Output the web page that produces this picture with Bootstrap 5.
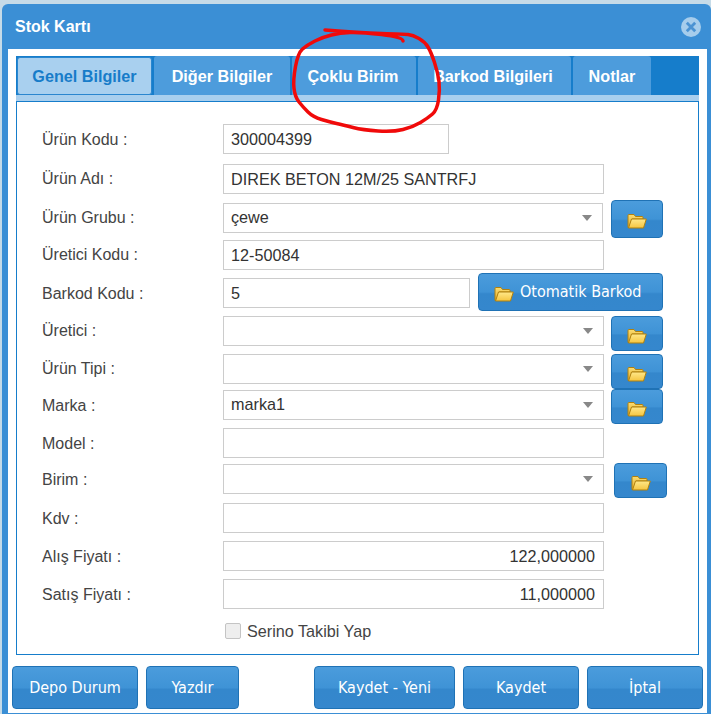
<!DOCTYPE html>
<html lang="tr">
  <head>
    <meta charset="UTF-8" />
    <meta name="viewport" content="width=device-width, initial-scale=1.0" />
    <title>Stok Kartı</title>
    <link
      href="https://cdn.jsdelivr.net/npm/bootstrap@5.3.0/dist/css/bootstrap.min.css"
      rel="stylesheet"
    />
    <style>
      html,
      body {
        height: 714px;
        overflow: hidden;
      }

      body {
        font-family: "Liberation Sans", Arial, sans-serif;
        background-color: #c6dbe8;
        position: relative;
      }

      .stok-window {
        margin: 4px 0 0 2px;
        width: 709px;
        height: 710px;
        background-color: #3b8fd5;
        border: 0;
        border-radius: 6px 6px 0 0;
      }

      .stok-head {
        height: 45px;
        padding: 0 10px 0 13px;
        background: transparent;
        border: 0;
        color: #fff;
        font-size: 16px;
        font-weight: bold;
      }

      .close-icon {
        width: 20px;
        height: 20px;
      }

      .stok-body {
        margin: 0 4px 0 6px;
        height: 664px;
        padding: 7px 8px 0;
        background-color: #fff;
      }

      .stok-tabs {
        height: 45px;
        gap: 2px;
        padding: 0 0 6px 1px;
        background: linear-gradient(#167dcb 39px, #a9cfee 39px);
        border: 0;
        flex-wrap: nowrap;
      }

      .stok-tabs .nav-link {
        height: 39px;
        margin: 0;
        padding: 0;
        text-align: center;
        line-height: 40px;
        font-size: 16.2px;
        font-weight: bold;
        color: #fff;
        background-color: #4d9cdc;
        border: 0;
        border-radius: 3px 3px 0 0;
      }

      .stok-tabs .nav-link.active {
        line-height: 36px;
        margin-top: 1px;
        height: 38px;
        color: #177cc9;
        background-color: #a9d0ef;
        border: 1px solid #2a86cf;
        border-radius: 3px;
      }

      .tab-w1 { width: 135px; }
      .tab-w2 { width: 136px; }
      .stok-tabs .tab-w3 { width: 124px; padding-right: 2px; }
      .stok-tabs .tab-w4 { width: 153px; padding-right: 3px; }
      .tab-w5 { width: 78px; }

      .stok-panel {
        height: 554px;
        padding: 22px 0 0 25px;
        border: 1px solid #167dcb;
      }

      .form-rows {
        display: grid;
        grid-template-rows: 40px 39px 37px 38px 38px 38px 36px 38px 36px 39px 38px 38px 37px 30px;
      }

      .form-rows .stok-label {
        width: 181px;
        flex: none;
        font-size: 16px;
        line-height: 32px;
        color: #444;
        margin: 0;
      }

      .form-rows .stok-label.label-up {
        line-height: 29px;
      }

      .form-rows .form-control,
      .form-rows .form-select {
        height: 30px;
        padding: 0 8px 0 7px;
        flex: none;
        font-size: 16.2px;
        color: #333;
        border: 1px solid #ccc;
        border-radius: 0;
        box-shadow: none;
      }

      .form-rows .form-select {
        padding-bottom: 2px;
        background-image: url("data:image/svg+xml,%3csvg xmlns='http://www.w3.org/2000/svg' viewBox='0 0 10 6'%3e%3cpath fill='%23888' d='M0 0h10L5 6z'/%3e%3c/svg%3e");
        background-size: 10px 6px;
        background-position: right 10px center;
      }

      .w-short { width: 226px; }
      .form-rows .w-full { width: 381px; }
      .form-rows .w-sel { width: 380px; }
      .form-rows .w-bar { width: 247px; }

      .btn-stok {
        --bs-btn-padding-x: 0;
        --bs-btn-padding-y: 0;
        color: #fff;
        background: linear-gradient(#4b9cdc, #3f93d6 50%, #3487cc 55%, #3587cd);
        border: 1px solid #1f72b5;
        border-radius: 4px;
      }

      .btn-stok:hover {
        color: #fff;
        background: #3587cd;
      }

      .btn-folder {
        width: 52px;
        height: 38px;
        flex: none;
        margin-left: 7px;
      }

      .btn-folder svg,
      .btn-auto svg {
        width: 20px;
        height: 16px;
        margin-top: 3px;
      }

      .lift-1 { margin-top: -1px; }
      .lift-3 { margin-top: -3px; }
      .short-btn { height: 35px; }
      .wide-gap { margin-left: 10px; width: 53px; }

      .btn-auto {
        width: 185px;
        height: 38px;
        margin: -5px 0 0 8px;
        padding-left: 15px;
        font-family: "DejaVu Sans Condensed", "Liberation Sans", sans-serif;
        font-size: 16px;
        gap: 6px;
      }

      .check-row {
        padding-left: 2px;
      }

      .check-row .form-check-input {
        width: 16px;
        height: 16px;
        margin: 0 6px 0 0;
        background-color: #eee;
        border: 1px solid #c4c4c4;
        border-radius: 2px;
      }

      .check-row label {
        font-size: 16.2px;
        color: #444;
      }

      .stok-foot {
        gap: 8px;
        margin: 11px -4px 0;
      }

      .stok-foot .btn-stok {
        height: 43px;
        padding-top: 1px;
        font-family: "DejaVu Sans Condensed", "Liberation Sans", sans-serif;
        font-size: 16px;
      }

      .fb-depo { width: 126px; }
      .fb-yazdir { width: 93px; }
      .fb-yeni { width: 141px; }
      .fb-kaydet { width: 116px; }

      .scribble {
        position: absolute;
        left: 0;
        top: 0;
        width: 711px;
        height: 714px;
        pointer-events: none;
      }
    </style>
  </head>
  <body>
    <svg width="0" height="0" class="position-absolute">
      <defs>
        <linearGradient id="folderBack" x1="0" y1="0" x2="0" y2="1">
          <stop offset="0" stop-color="#fbdc70" />
          <stop offset="1" stop-color="#e5ae2c" />
        </linearGradient>
        <linearGradient id="folderFront" x1="0" y1="0" x2="0" y2="1">
          <stop offset="0" stop-color="#ffe88a" />
          <stop offset="1" stop-color="#f5c540" />
        </linearGradient>
        <symbol id="folder" viewBox="0 0 20 16">
          <path d="M1 14.5V2.5Q1 1.5 2 1.5H7L8.5 3.5H15Q16 3.5 16 4.5V6H5L2.5 14.5Z" fill="url(#folderBack)" stroke="#b0800f" />
          <path d="M1.5 15 4.5 6H19.3L16.5 15Z" fill="url(#folderFront)" stroke="#b0800f" stroke-linejoin="round" />
        </symbol>
      </defs>
    </svg>

    <div class="card stok-window">
      <div class="card-header stok-head d-flex align-items-center justify-content-between">
        <span>Stok Kartı</span>
        <svg class="close-icon" viewBox="0 0 20 20">
          <circle cx="10" cy="10" r="10" fill="#a6cdec" />
          <path d="M5.8 5.8 14.2 14.2M14.2 5.8 5.8 14.2" stroke="#4b93d3" stroke-width="2.8" />
        </svg>
      </div>
      <div class="stok-body">
        <ul class="nav nav-tabs stok-tabs">
          <li class="nav-item"><a class="nav-link active tab-w1" href="#">Genel Bilgiler</a></li>
          <li class="nav-item"><a class="nav-link tab-w2" href="#">Diğer Bilgiler</a></li>
          <li class="nav-item"><a class="nav-link tab-w3" href="#">Çoklu Birim</a></li>
          <li class="nav-item"><a class="nav-link tab-w4" href="#">Barkod Bilgileri</a></li>
          <li class="nav-item"><a class="nav-link tab-w5" href="#">Notlar</a></li>
        </ul>
        <div class="stok-panel">
          <form class="form-rows">
            <div class="d-flex align-items-start">
              <label class="stok-label">Ürün Kodu :</label>
              <input class="form-control w-short" value="300004399" />
            </div>
            <div class="d-flex align-items-start">
              <label class="stok-label label-up">Ürün Adı :</label>
              <input class="form-control w-full" value="DIREK BETON 12M/25 SANTRFJ" />
            </div>
            <div class="d-flex align-items-start">
              <label class="stok-label label-up">Ürün Grubu :</label>
              <select class="form-select w-sel"><option>çewe</option></select>
              <button type="button" class="btn btn-stok btn-folder lift-3 ms-2"><svg><use href="#folder" /></svg></button>
            </div>
            <div class="d-flex align-items-start">
              <label class="stok-label label-up">Üretici Kodu :</label>
              <input class="form-control w-full" value="12-50084" />
            </div>
            <div class="d-flex align-items-start">
              <label class="stok-label">Barkod Kodu :</label>
              <input class="form-control w-bar" value="5" />
              <button type="button" class="btn btn-stok btn-auto d-flex align-items-center">
                <svg><use href="#folder" /></svg>Otomatik Barkod
              </button>
            </div>
            <div class="d-flex align-items-start">
              <label class="stok-label label-up">Üretici :</label>
              <select class="form-select w-full"><option></option></select>
              <button type="button" class="btn btn-stok btn-folder short-btn"><svg><use href="#folder" /></svg></button>
            </div>
            <div class="d-flex align-items-start">
              <label class="stok-label label-up">Ürün Tipi :</label>
              <select class="form-select w-full"><option></option></select>
              <button type="button" class="btn btn-stok btn-folder short-btn"><svg><use href="#folder" /></svg></button>
            </div>
            <div class="d-flex align-items-start">
              <label class="stok-label">Marka :</label>
              <select class="form-select w-full"><option>marka1</option></select>
              <button type="button" class="btn btn-stok btn-folder short-btn lift-1"><svg><use href="#folder" /></svg></button>
            </div>
            <div class="d-flex align-items-start">
              <label class="stok-label">Model :</label>
              <input class="form-control w-full" />
            </div>
            <div class="d-flex align-items-start">
              <label class="stok-label">Birim :</label>
              <select class="form-select w-full"><option></option></select>
              <button type="button" class="btn btn-stok btn-folder short-btn lift-1 wide-gap"><svg><use href="#folder" /></svg></button>
            </div>
            <div class="d-flex align-items-start">
              <label class="stok-label">Kdv :</label>
              <input class="form-control w-full" />
            </div>
            <div class="d-flex align-items-start">
              <label class="stok-label">Alış Fiyatı :</label>
              <input class="form-control w-full text-end" value="122,000000" />
            </div>
            <div class="d-flex align-items-start">
              <label class="stok-label">Satış Fiyatı :</label>
              <input class="form-control w-full text-end" value="11,000000" />
            </div>
            <div class="d-flex align-items-center">
              <span class="stok-label"></span>
              <div class="check-row d-flex align-items-center">
                <input type="checkbox" class="form-check-input" id="serino" />
                <label for="serino">Serino Takibi Yap</label>
              </div>
            </div>
          </form>
        </div>
        <div class="stok-foot d-flex">
          <button type="button" class="btn btn-stok fb-depo">Depo Durum</button>
          <button type="button" class="btn btn-stok fb-yazdir">Yazdır</button>
          <button type="button" class="btn btn-stok fb-yeni ms-auto">Kaydet - Yeni</button>
          <button type="button" class="btn btn-stok fb-kaydet">Kaydet</button>
          <button type="button" class="btn btn-stok fb-kaydet">İptal</button>
        </div>
      </div>
    </div>

    <svg class="scribble" viewBox="0 0 711 714">
      <path
        d="M325 30Q360 33 381.5 33.5Q403 34 408 34.5Q413 35 419 38.5Q425 42 428 47Q431 52 434.5 62.5Q438 73 439 81.5Q440 90 438.5 100Q437 110 432.5 114Q428 118 420.5 122.5Q413 127 403 129.5Q393 132 378 131Q363 130 353 127.5Q343 125 336.5 123.5Q330 122 321.5 119.5Q313 117 308 112Q303 107 299 102Q295 97 294 88.5Q293 80 295.5 66.5Q298 53 302.5 49Q307 45 315 41Q323 37 331.5 35Q340 33 350 32.5Q360 32 381.5 34.5Q403 37 403 41"
        fill="none"
        stroke="#f00a0a"
        stroke-width="3.5"
        stroke-linecap="round"
        stroke-linejoin="round"
      />
    </svg>

    <script src="https://cdn.jsdelivr.net/npm/bootstrap@5.3.0/dist/js/bootstrap.bundle.min.js"></script>
  </body>
</html>
